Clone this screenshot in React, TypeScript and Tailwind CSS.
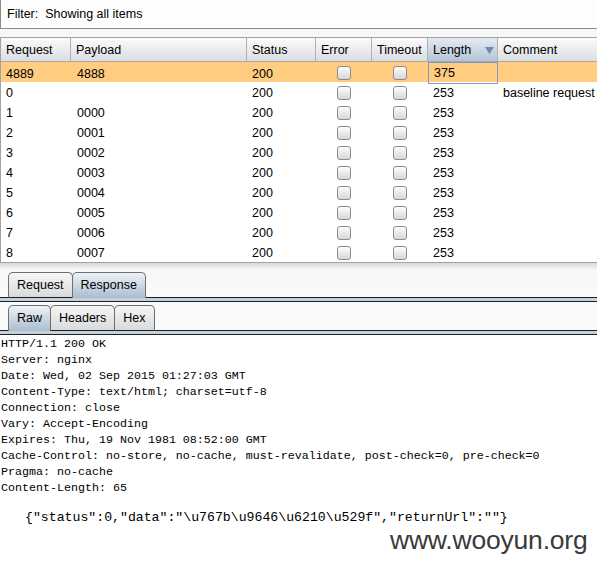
import React from "react";

const rows = [
  { req: "4889", pay: "4888", status: "200", len: "375", comment: "", sel: true },
  { req: "0", pay: "", status: "200", len: "253", comment: "baseline request" },
  { req: "1", pay: "0000", status: "200", len: "253", comment: "" },
  { req: "2", pay: "0001", status: "200", len: "253", comment: "" },
  { req: "3", pay: "0002", status: "200", len: "253", comment: "" },
  { req: "4", pay: "0003", status: "200", len: "253", comment: "" },
  { req: "5", pay: "0004", status: "200", len: "253", comment: "" },
  { req: "6", pay: "0005", status: "200", len: "253", comment: "" },
  { req: "7", pay: "0006", status: "200", len: "253", comment: "" },
  { req: "8", pay: "0007", status: "200", len: "253", comment: "" },
];

const headerLines = [
  "HTTP/1.1 200 OK",
  "Server: nginx",
  "Date: Wed, 02 Sep 2015 01:27:03 GMT",
  "Content-Type: text/html; charset=utf-8",
  "Connection: close",
  "Vary: Accept-Encoding",
  "Expires: Thu, 19 Nov 1981 08:52:00 GMT",
  "Cache-Control: no-store, no-cache, must-revalidate, post-check=0, pre-check=0",
  "Pragma: no-cache",
  "Content-Length: 65",
];

const cols = "grid grid-cols-[70px_176px_69px_56px_56px_70px_1fr]";

function Checkbox() {
  return (
    <div className="w-[14px] h-[14px] rounded-[3px] border border-[#8c8c8c] bg-linear-to-b from-[#fdfdfd] to-[#d6d7d9]" />
  );
}

function Tab({ label, selected }: { label: string; selected?: boolean }) {
  return (
    <div
      className={
        selected
          ? "h-[26px] -ml-px first:ml-0 px-[8px] flex items-center rounded-t-[5px] border border-b-0 border-[#6f6f6f] bg-linear-to-b from-[#eef2f6] to-[#aabdd0] text-black"
          : "h-[26px] -ml-px first:ml-0 px-[8px] flex items-center rounded-t-[5px] border border-[#6f6f6f] border-b-[#1e1e1e] bg-linear-to-b from-[#f6f6f6] to-[#d9dadc] text-black"
      }
    >
      <span className="leading-none">{label}</span>
    </div>
  );
}

function TabBar({ tabs, selected, height }: { tabs: string[]; selected: string; height: string }) {
  return (
    <div className={`flex items-end ${height}`}>
      <div className="w-[8px] h-px bg-[#1e1e1e]" />
      <div className="flex items-end">
        {tabs.map((t) => (
          <Tab key={t} label={t} selected={t === selected} />
        ))}
      </div>
      <div className="flex-1 h-px bg-[#1e1e1e]" />
    </div>
  );
}

function Strip() {
  return (
    <div>
      <div className="h-[3px] bg-[#c3d1df]" />
      <div className="h-px bg-[#1e1e1e]" />
    </div>
  );
}

export default function App() {
  return (
    <div className="relative w-[597px] h-[571px] overflow-hidden bg-white font-['Liberation_Sans',Arial,sans-serif] text-[12.5px] text-black">
      {/* Filter bar */}
      <div className="h-[29px] bg-[#fdfdfd] border-l border-b border-[#8a8a8a] flex items-center pl-[6px]">
        <span className="whitespace-pre">Filter:  Showing all items</span>
      </div>
      <div className="h-[8px] bg-[#f7f7f7]" />

      {/* Table */}
      <div className="border-t border-l border-b border-[#a2a2a2] bg-white">
        <div className={`${cols} h-[24px] border-b border-[#a9a9a9] bg-linear-to-b from-[#fbfbfc] to-[#dcdde1]`}>
          {["Request", "Payload", "Status", "Error", "Timeout", "Length", "Comment"].map((h, i) => (
            <div
              key={h}
              className={
                h === "Length"
                  ? "relative flex items-center pl-[5px] pt-[2px] border-r border-[#b0b0b0] bg-linear-to-b from-[#e4ebf2] to-[#b5c5d6]"
                  : i === 6
                  ? "flex items-center pl-[5px] pt-[2px]"
                  : "flex items-center pl-[5px] pt-[2px] border-r border-[#b0b0b0]"
              }
            >
              {h}
              {h === "Length" && (
                <svg className="absolute right-[3px] top-[9px]" width="9" height="7" viewBox="0 0 9 7">
                  <path d="M0 0 L9 0 L4.5 7 Z" fill="#6b8bb0" />
                </svg>
              )}
            </div>
          ))}
        </div>
        {rows.map((r) => (
          <div key={r.req} className={`${cols} h-[20px] ${r.sel ? "bg-[#ffcc80]" : "bg-white"}`}>
            <div className="flex items-center pl-[5px] pt-[2px]">{r.req}</div>
            <div className="flex items-center pl-[6px] pt-[2px]">{r.pay}</div>
            <div className="flex items-center pl-[5px] pt-[2px]">{r.status}</div>
            <div className="flex items-center justify-center pt-px">
              <Checkbox />
            </div>
            <div className="flex items-center justify-center pt-px">
              <Checkbox />
            </div>
            <div className={`flex items-center pl-[5px] pt-[2px] ${r.sel ? "border border-[#7b9dc3] pl-[4px] pt-px" : ""}`}>{r.len}</div>
            <div className="flex items-center pl-[5px] pt-[2px] whitespace-nowrap overflow-hidden">{r.comment}</div>
          </div>
        ))}
      </div>

      {/* Tabs */}
      <div className="bg-linear-to-b from-[#d9d9d9] via-[#f7f7f7] via-20% to-[#fafafa]">
        <TabBar tabs={["Request", "Response"]} selected="Response" height="h-[35px]" />
      </div>
      <Strip />
      <div className="bg-[#fafafa]">
        <TabBar tabs={["Raw", "Headers", "Hex"]} selected="Raw" height="h-[29px]" />
      </div>
      <Strip />

      {/* Message body */}
      <div className="pt-[1px] pl-[1px] font-['Liberation_Mono',monospace] text-black">
        {headerLines.map((l) => (
          <div key={l} className="text-[11.67px] leading-[16px] whitespace-pre">
            {l}
          </div>
        ))}
        <div className="mt-[14px] pl-[24px] text-[13.2px] leading-[16px] whitespace-pre">
          {'{"status":0,"data":"\\u767b\\u9646\\u6210\\u529f","returnUrl":""}'}
        </div>
      </div>

      {/* Watermark */}
      <div className="absolute left-[390px] top-[525px] text-[26.5px] leading-[30px] text-[#3a3a3a] font-['Liberation_Sans',Arial,sans-serif] tracking-[-0.2px]">
        www.wooyun.org
      </div>
    </div>
  );
}
